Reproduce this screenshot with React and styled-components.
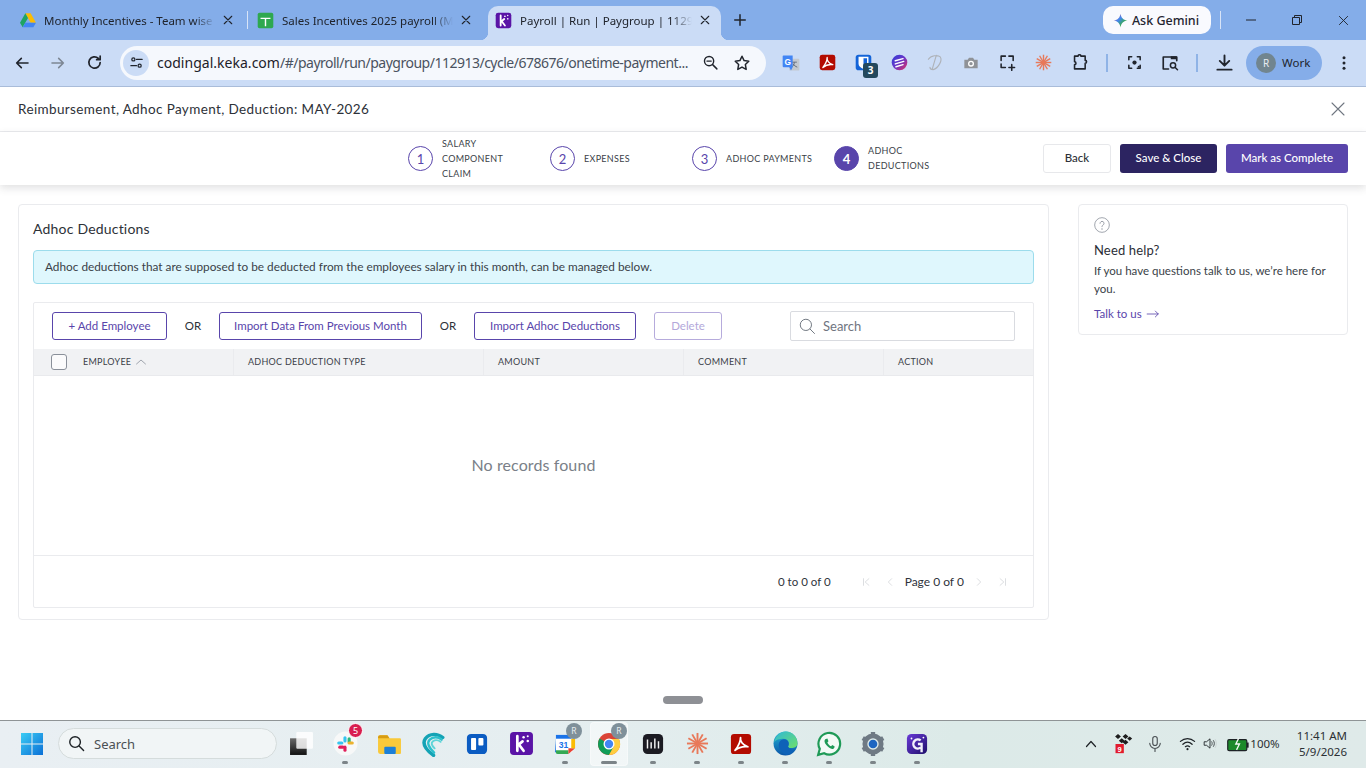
import React from "react";
import styled, { createGlobalStyle } from "styled-components";

const Global = createGlobalStyle`
  html, body { margin: 0; padding: 0; width: 1366px; height: 768px; overflow: hidden; background: #fff; }
  * { box-sizing: border-box; }
  #root { width: 1366px; height: 768px; display: flex; flex-direction: column; font-family: "Lato", "Liberation Sans", sans-serif; color: #2c3038; }
`;

const UI = `"Noto Sans", "Liberation Sans", sans-serif`;

/* ---------- browser chrome ---------- */
const TabStrip = styled.div`
  height: 40px; flex: none; background: #84ade9; display: flex; align-items: flex-end; padding-left: 8px; font-family: ${UI};
`;
const Tab = styled.div`
  width: ${p => p.$w}px; height: 34px; margin-right: ${p => p.$mr || 0}px; padding: 0 ${p => p.$pr || 8}px 6px ${p => p.$pl ?? 12}px; display: flex; align-items: center; gap: 8px;
  border-radius: 10px 10px 0 0; background: ${p => (p.$active ? "#cbdcf6" : "transparent")}; position: relative; flex: none;
  font-size: 11.5px; color: #20242c;
  ${p => p.$active && `
    &::before, &::after { content: ""; position: absolute; bottom: 0; width: 8px; height: 8px; }
    &::before { left: -8px; background: radial-gradient(circle at 0 0, transparent 8px, #cbdcf6 8.5px); }
    &::after { right: -8px; background: radial-gradient(circle at 100% 0, transparent 8px, #cbdcf6 8.5px); }
  `}
`;
const TabTitle = styled.span`
  flex: 1; min-width: 0; white-space: nowrap;
  -webkit-mask-image: linear-gradient(90deg, #000 88%, transparent);
  mask-image: linear-gradient(90deg, #000 88%, transparent);
`;
const TabSep = styled.div`
  width: 1px; height: 18px; background: #d8e4f7; margin: 0 9px 11px 6px; flex: none;
`;
const NewTab = styled.div`
  width: 24px; height: 34px; padding-bottom: 6px; display: flex; align-items: center; justify-content: center; margin-left: 7px;
`;
const Gemini = styled.div`
  margin-left: auto; margin-bottom: 6px; width: 108px; height: 28px; border-radius: 10px; background: #f9fafe; display: flex; align-items: center;
  justify-content: center; gap: 4px; padding-right: 2px; font-size: 12.5px; color: #1f2530; font-weight: 500;
`;
const WinControls = styled.div`
  display: flex; align-items: center; height: 40px; align-self: flex-start; flex: none;
`;
const WinSep = styled.div` width: 1px; height: 18px; background: #d8e4f7; margin: 0 7px 0 9px; `;
const WinBtn = styled.div` width: 46px; height: 40px; display: flex; align-items: center; justify-content: center; `;

const Toolbar = styled.div`
  height: 47px; flex: none; background: #cbdcf6; display: flex; align-items: center; padding: 0 0 1px 4px; border-bottom: 1px solid #a9bcd9;
  font-family: ${UI};
`;
const ToolBtn = styled.div`
  width: 36px; height: 34px; flex: none; display: flex; align-items: center; justify-content: center; position: relative;
`;
const Address = styled.div`
  width: 646px; height: 34px; border-radius: 17px; background: #f5f8fd; margin: 0 7px 0 8px; display: flex; align-items: center; padding: 0 8px 0 3px; flex: none;
`;
const SiteChip = styled.div`
  width: 26px; height: 26px; border-radius: 50%; background: #cbdcf6; display: flex; align-items: center; justify-content: center; margin-right: 8px; flex: none;
`;
const Url = styled.div`
  flex: 1; font-size: 14px; white-space: nowrap; color: #4a5260; letter-spacing: -.5px;
  b { font-weight: 400; color: #1d2129; letter-spacing: .02px; }
`;
const AddrBtn = styled.div` width: 32px; height: 34px; display: flex; align-items: center; justify-content: center; flex: none; `;
const ToolSep = styled.div` width: 2px; height: 18px; background: #8fb3e6; margin: 0 8px 0 ${p => p.$ml || 8}px; flex: none; `;
const Badge3 = styled.span`
  position: absolute; right: 3px; bottom: 2px; width: 15px; height: 15px; border-radius: 3px; background: #24495e; color: #fff; font-size: 10px; font-weight: 700;
  display: flex; align-items: center; justify-content: center; line-height: 1;
`;
const Profile = styled.div`
  width: 76px; height: 34px; border-radius: 17px; background: #85ade9; display: flex; align-items: center; padding-left: 10px; gap: 6px; font-size: 11.5px; color: #20242c; margin-left: 4px; flex: none;
`;
const Avatar = styled.div`
  width: 20px; height: 20px; border-radius: 50%; background: #71858f; color: #e8edf2; font-size: 10px; display: flex; align-items: center; justify-content: center;
`;
const DotsBtn = styled(ToolBtn)` margin-left: 4px; `;

/* ---------- page ---------- */
const Page = styled.div`
  flex: 1; min-height: 0; background: #fff; display: flex; flex-direction: column; position: relative;
`;
const TitleBar = styled.div`
  height: 45px; flex: none; display: flex; align-items: center; justify-content: space-between; padding: 0 20px 1px 18px; border-bottom: 1px solid #eaebee;
  font-size: 13.5px; font-weight: 400; color: #2d3138; letter-spacing: .38px;
`;
const Stepper = styled.div`
  height: 53px; flex: none; display: flex; align-items: center; padding: 0 18px 0 408px; box-shadow: 0 3px 8px rgba(60,60,70,.16); position: relative;
`;
const Step = styled.div` width: 142px; display: flex; align-items: center; gap: 9px; flex: none; `;
const StepNum = styled.div`
  width: 25px; height: 25px; border-radius: 50%; flex: none; display: flex; align-items: center; justify-content: center; font-size: 13px;
  border: 1px solid #5945ab; color: ${p => (p.$on ? "#fff" : "#5945ab")}; background: ${p => (p.$on ? "#5945ab" : "#fff")}; font-weight: ${p => (p.$on ? 700 : 400)};
`;
const StepLabel = styled.div`
  width: ${p => p.$w || 90}px; font-size: 9px; line-height: 15px; text-transform: uppercase; color: #3b3f48; letter-spacing: .3px; padding-bottom: 1px; white-space: ${p => p.$nw ? "nowrap" : "normal"};
`;
const StepButtons = styled.div` margin-left: auto; display: flex; gap: 9px; `;
const ActionBtn = styled.button`
  height: 29px; width: ${p => p.$w}px; border-radius: 3px; font: 500 11.5px "Lato", sans-serif; padding: 0 0 2px; cursor: pointer;
  border: 1px solid ${p => p.$border || "transparent"}; background: ${p => p.$bg || "#fff"}; color: ${p => p.$color || "#fff"};
`;
const Body = styled.div`
  padding: 19px 18px 0; display: flex; gap: 29px; align-items: flex-start;
`;
const Card = styled.section`
  background: #fff; border: 1px solid #eaebee; border-radius: 4px;
`;
const MainCard = styled(Card)` width: 1031px; height: 416px; padding: 0 14px; flex: none; `;
const CardTitle = styled.h2`
  margin: 0; height: 45px; padding-top: 15px; font-size: 14px; line-height: 17px; font-weight: 400; color: #2d3138; letter-spacing: .2px;
`;
const Info = styled.div`
  height: 34px; background: #dff7fd; border: 1px solid #9cdcec; border-radius: 4px; display: flex; align-items: center; padding: 0 0 1px 11px; font-size: 11.8px; color: #3a3f48;
`;
const Grid = styled.div`
  margin-top: 18px; height: 306px; border: 1px solid #eaebee; border-radius: 2px; display: flex; flex-direction: column;
`;
const GridTools = styled.div`
  height: 46px; flex: none; display: flex; align-items: center; padding: 0 18px; font-size: 11.5px;
`;
const Outline = styled.button`
  height: 28px; width: ${p => p.$w}px; border-radius: 3px; background: #fff; border: 1px solid ${p => (p.$off ? "#b6abdc" : "#5945ab")}; color: ${p => (p.$off ? "#b3a8da" : "#5945ab")};
  font: 400 11.5px "Lato", sans-serif; padding: 0 0 2px; flex: none; margin-left: ${p => p.$ml || 0}px;
`;
const Or = styled.span` width: 52px; text-align: center; flex: none; color: #2c3038; font-size: 11.5px; padding-bottom: 2px; `;
const SearchBox = styled.div`
  margin-left: auto; width: 225px; height: 30px; border: 1px solid #d9dbe0; border-radius: 2px; display: flex; align-items: center; gap: 7px; padding-left: 7px; color: #70757f; font-size: 13px;
`;
const Head = styled.div`
  height: 27px; flex: none; background: #f1f2f4; border-bottom: 1px solid #e9eaed; display: grid; grid-template-columns: 199px 250px 200px 200px 1fr;
`;
const HeadCell = styled.div`
  display: flex; align-items: center; padding: 0 0 1px ${p => p.$pl || 14}px; font-size: 9px; letter-spacing: .27px; color: #3b3f48; border-left: ${p => (p.$first ? "0" : "1px solid #eaebee")};
`;
const Check = styled.span`
  width: 16px; height: 16px; border: 1.5px solid #8a909a; border-radius: 3px; background: #fbfbfc; margin: 0 16px 0 -1px; flex: none;
`;
const SortUp = styled.svg` margin-left: 4px; `;
const Empty = styled.div`
  flex: 1; display: flex; align-items: center; justify-content: center; color: #7a7f88; font-size: 16px; letter-spacing: .1px; padding-bottom: 2px;
`;
const Foot = styled.div`
  height: 52px; flex: none; border-top: 1px solid #eaebee; display: flex; align-items: center; padding: 0 25px 0 744px; font-size: 11.5px; color: #2f333b;
`;
const FootText = styled.span` white-space: nowrap; font-size: ${p => p.$fs || 11.5}px; margin-left: ${p => p.$ml || 0}px; `;
const PageArrow = styled.span` width: 16px; display: flex; justify-content: center; flex: none; margin-left: ${p => p.$ml || 8}px; `;
const HelpCard = styled(Card)` width: 270px; height: 131px; padding: 12px 15px; flex: none; `;
const HelpTitle = styled.div` margin-top: 5px; font-size: 13px; line-height: 18px; font-weight: 400; color: #2a2e36; letter-spacing: .15px; `;
const HelpText = styled.div` margin-top: 3px; font-size: 11.5px; line-height: 18px; color: #3a3f48; `;
const HelpLink = styled.div` margin-top: 9px; font-size: 11.5px; line-height: 14px; color: #5945ab; display: flex; align-items: center; gap: 4px; `;
const Grip = styled.div`
  position: absolute; left: 663px; bottom: 16px; width: 40px; height: 8px; border-radius: 4px; background: #8e9095;
`;

/* ---------- taskbar ---------- */
const Taskbar = styled.div`
  height: 48px; flex: none; background: linear-gradient(90deg, #e9eff3 0%, #e5eef0 40%, #dceae8 70%, #dfeae9 100%); border-top: 1px solid #8f9496;
  display: flex; align-items: center; padding: 0 0 2px 20px; font-family: ${UI}; color: #1d2226;
`;
const SearchPill = styled.div`
  width: 219px; height: 31px; border-radius: 16px; background: #f1f5f6; border: 1px solid #d5dcdc; margin-left: 14px; display: flex; align-items: center; gap: 9px; padding-left: 9px;
  font-size: 13px; color: #4b5054; flex: none;
`;
const Tasks = styled.div` display: flex; margin-left: 2px; `;
const TaskItem = styled.div`
  height: 44px; display: flex; align-items: center; justify-content: center; position: relative; flex: none;
  border-radius: 4px; background: ${p => (p.$active ? "rgba(255,255,255,.5)" : "transparent")};
  box-shadow: ${p => (p.$active ? "inset 0 0 0 1px rgba(255,255,255,.4)" : "none")};
  width: ${p => (p.$active ? "38px" : "44px")}; margin: ${p => (p.$active ? "0 3px" : "0")};
`;
const RunDot = styled.span`
  position: absolute; bottom: 2px; left: 50%; transform: translateX(-50%); height: 3px; border-radius: 2px; width: ${p => (p.$wide ? 16 : 6)}px; background: #7c8488;
`;
const CountBadge = styled.span`
  position: absolute; top: 1px; right: 4px; width: 15px; height: 15px; border-radius: 50%; background: #d81e4f; border: 1px solid #fff; color: #fff; font-size: 9px; display: flex; align-items: center; justify-content: center;
`;
const RBadge = styled.span`
  position: absolute; top: 1px; right: ${p => p.$r ?? 5}px; width: 16px; height: 16px; border-radius: 50%; background: #7f909a; color: #e9eef1; font-size: 8.5px; display: flex; align-items: center; justify-content: center;
`;
const Tray = styled.div` margin-left: auto; display: flex; align-items: center; height: 100%; padding-right: 19px; `;
const TraySlot = styled.div` width: ${p => p.$w}px; display: flex; justify-content: center; align-items: center; flex: none; `;
const Battery = styled.div` width: 20px; margin-left: -4px; display: flex; justify-content: center; flex: none; font-size: 11.5px; color: #2b3034; `;
const Clock = styled.div` width: 56px; margin-left: 16px; text-align: right; font-size: 11.5px; line-height: 16px; color: #2b3034; `;

/* ---------- drawings ---------- */
const S = ({ w = 16, h, vb = "0 0 24 24", children, ...r }) => (
  <svg width={w} height={h || w} viewBox={vb} fill="none" {...r}>{children}</svg>
);
const L = ({ d, c = "#20242c", sw = 2, ...r }) => <path d={d} stroke={c} strokeWidth={sw} strokeLinecap="round" strokeLinejoin="round" fill="none" {...r} />;

const DriveIco = () => (
  <S w={16} vb="0 0 24 22">
    <path d="M8 1h8l8 14h-8z" fill="#fbbc04" />
    <path d="M8 1 0 15l4 7 8-14z" fill="#1fa463" />
    <path d="M4 22h16l4-7H8z" fill="#4285f4" />
  </S>
);
const SheetIco = () => (
  <S w={17}><rect x="1" y="1" width="22" height="22" rx="2.5" fill="#2ea84f" /><path d="M5 8h14v2h-6v10h-2V10H5z" fill="#fff" /></S>
);
const KekaIco = ({ w = 17 }) => (
  <S w={w}>
    <rect x="1" y="1" width="22" height="22" rx="3.5" fill="#5a14a6" />
    <path d="M8 5v14M8 14l5-4M9.5 13 14 19" stroke="#fff" strokeWidth="2.6" strokeLinecap="round" />
    <circle cx="14" cy="6" r="1.2" fill="#fff" /><circle cx="18" cy="9.5" r="1.2" fill="#fff" /><circle cx="18" cy="5" r="1" fill="#fff" />
  </S>
);
const X = ({ w = 10, c = "#20242c", sw = 2.6 }) => <S w={w}><L d="M3 3l18 18M21 3 3 21" c={c} sw={sw} /></S>;
const GemStar = () => (
  <S w={15}>
    <path d="M12 1c1 6 4 10 11 11-7 1-10 5-11 11-1-6-4-10-11-11 7-1 10-5 11-11z" fill="url(#gm)" />
    <defs><linearGradient id="gm" x1="0" y1="0" x2="1" y2="1"><stop offset="0" stopColor="#ea4335" /><stop offset=".4" stopColor="#4285f4" /><stop offset=".7" stopColor="#34a853" /><stop offset="1" stopColor="#fbbc04" /></linearGradient></defs>
  </S>
);
const PdfIco = ({ w = 15 }) => (
  <S w={w}>
    <rect x="1" y="1" width="22" height="22" rx="3.5" fill="#b30b00" />
    <path d="M11.5 5c-.6 3.5 2 8.5 8 10-4.5-.6-10 .6-14 4 2.800-3.500 6-9 6-14z" stroke="#fff" strokeWidth="1.9" fill="none" strokeLinejoin="round" />
  </S>
);
const SplashIco = ({ w = 16 }) => (
  <S w={w}>
    {[0, 30, 60, 90, 120, 150].map(a => (
      <line key={a} x1="12" y1="1" x2="12" y2="23" stroke="#e8795a" strokeWidth="2" transform={`rotate(${a} 12 12)`} />
    ))}
  </S>
);
const ChromeIco = () => (
  <S w={24}>
    <circle cx="12" cy="12" r="11" fill="#db4437" />
    <path d="M12 12 2.5 6.5A11 11 0 0 0 12 23l5-8z" fill="#0f9d58" />
    <path d="M12 7h10a11 11 0 0 1-10 16l5-9z" fill="#ffcd40" />
    <circle cx="12" cy="12" r="5.5" fill="#fff" /><circle cx="12" cy="12" r="4.2" fill="#4285f4" />
  </S>
);

export default function App() {
  return (
    <>
      <Global />
      <TabStrip>
        <Tab $w={233}>
          <DriveIco /><TabTitle>Monthly Incentives - Team wise</TabTitle><X />
        </Tab>
        <TabSep />
        <Tab $w={222} $mr={9} $pl={0}>
          <SheetIco /><TabTitle>Sales Incentives 2025 payroll (M</TabTitle><X />
        </Tab>
        <Tab $w={233} $active $pl={7} $pr={11}>
          <KekaIco /><TabTitle>Payroll | Run | Paygroup | 11291</TabTitle><X />
        </Tab>
        <NewTab><S w={14}><L d="M12 3v18M3 12h18" sw={2.6} /></S></NewTab>
        <Gemini><GemStar />Ask Gemini</Gemini>
        <WinControls>
          <WinSep />
          <WinBtn><S w={10} vb="0 0 10 10"><path d="M0 5h10" stroke="#20242c" /></S></WinBtn>
          <WinBtn><S w={10} vb="0 0 10 10"><path d="M.5 2.5h7v7h-7zM2.5 2V.5h7v7H8" stroke="#20242c" fill="none" /></S></WinBtn>
          <WinBtn><X w={11} sw={2} /></WinBtn>
        </WinControls>
      </TabStrip>
      <Toolbar>
        <ToolBtn><S w={16}><L d="M21 12H4M11 5l-7 7 7 7" sw={2.4} /></S></ToolBtn>
        <ToolBtn><S w={16}><L d="M3 12h17M13 5l7 7-7 7" c="#7d8794" sw={2.4} /></S></ToolBtn>
        <ToolBtn><S w={17}><L d="M20 12a8 8 0 1 1-2.5-5.8M20 3v5h-5" sw={2.4} /></S></ToolBtn>
        <Address>
          <SiteChip><S w={15}><circle cx="7" cy="7" r="2.5" stroke="#20242c" strokeWidth="2" /><circle cx="17" cy="17" r="2.5" stroke="#20242c" strokeWidth="2" /><L d="M12 7h9M3 17h9" /></S></SiteChip>
          <Url><b>codingal.keka.com</b>/#/payroll/run/paygroup/112913/cycle/678676/onetime-payment...</Url>
          <AddrBtn><S w={17}><circle cx="10" cy="10" r="6.5" stroke="#20242c" strokeWidth="2" /><L d="M15 15l6 6M7 10h6" /></S></AddrBtn>
          <AddrBtn><S w={18}><path d="m12 3 2.8 5.8 6.2.9-4.5 4.4 1.1 6.4L12 17.500l-5.6 3 1.1-6.4L3 9.7l6.2-.9z" stroke="#20242c" strokeWidth="2" strokeLinejoin="round" /></S></AddrBtn>
        </Address>
        <ToolBtn><S w={20}><rect x="10" y="7" width="12" height="14" rx="1" fill="#c3c8cf" /><path d="M13 11h6M16 11c0 3-1.5 5-3.5 6M14.5 13c1 2 3 3 5 4" stroke="#667080" strokeWidth="1.2" /><path d="M2 4a1 1 0 0 1 1-1h11v14l-2 4-2-4H3a1 1 0 0 1-1-1z" fill="#4285f4" /><text x="8" y="14" fontSize="10" fontWeight="700" fill="#fff" textAnchor="middle" fontFamily="Liberation Sans">G</text></S></ToolBtn>
        <ToolBtn><PdfIco w={17} /></ToolBtn>
        <ToolBtn><S w={17}><rect x="1" y="1" width="22" height="22" rx="4" fill="#1464d8" /><path d="M5 4h14v10c0 3-3 5-7 7-4-2-7-4-7-7z" fill="#fff" /><path d="M12 6h5v8c0 2-2 3.5-5 5z" fill="#1464d8" /></S><Badge3>3</Badge3></ToolBtn>
        <ToolBtn><S w={17}><circle cx="12" cy="12" r="11" fill="url(#bw)" /><path d="M6 9.5l11-3M6 14l12-3.5M7 18l10-3" stroke="#fff" strokeWidth="2" strokeLinecap="round" /><defs><linearGradient id="bw" x1="0" y1="0" x2="1" y2="1"><stop offset="0" stopColor="#2f3fd8" /><stop offset=".5" stopColor="#6a35c8" /><stop offset="1" stopColor="#e8305a" /></linearGradient></defs></S></ToolBtn>
        <ToolBtn><S w={19}><path d="M3 8c3-5 12-6 15-3 3 4-2 14-9 16-3 0-4-1-4-3M13 3 8 20" stroke="#aeb2b8" strokeWidth="1.4" strokeLinecap="round" /></S></ToolBtn>
        <ToolBtn><S w={16}><path d="M2 7h5l2-3h6l2 3h5v13H2z" fill="#8f9297" /><circle cx="12" cy="13" r="4.5" fill="#fff" /><circle cx="12" cy="13" r="2.5" fill="#8f9297" /></S></ToolBtn>
        <ToolBtn><S w={17}><L d="M9 3H3v6M3 14v5h6M14 3h6v6M14 19h8M18 15v8" sw={2.2} /></S></ToolBtn>
        <ToolBtn><SplashIco w={17} /></ToolBtn>
        <ToolBtn><S w={17}><L d="M5 3h5a2 2 0 0 1 4 0h6v6a2 2 0 0 1 0 4v8H5v-6a2 2 0 0 0 0-4z" sw={2.2} /></S></ToolBtn>
        <ToolSep $ml={9} />
        <ToolBtn><S w={17}><L d="M4 8V4h4M16 4h4v4M4 16v4h4M20 16v4h-4" sw={2.2} /><circle cx="12" cy="12" r="3" fill="#20242c" /><circle cx="18" cy="18" r="1.5" fill="#20242c" /></S></ToolBtn>
        <ToolBtn><S w={18}><L d="M10 20H3V4h18v5" sw={2.2} /><path d="M13 3h8v4h-8z" fill="#20242c" /><circle cx="16" cy="15" r="3.5" stroke="#20242c" strokeWidth="2" /><L d="m19 18 3 3" /></S></ToolBtn>
        <ToolSep />
        <ToolBtn><S w={19}><L d="M12 3v12M6 10l6 6 6-6M3 21h18" sw={2.4} /></S></ToolBtn>
        <Profile><Avatar>R</Avatar>Work</Profile>
        <DotsBtn><S w={18}><circle cx="12" cy="5" r="2" fill="#20242c" /><circle cx="12" cy="12" r="2" fill="#20242c" /><circle cx="12" cy="19" r="2" fill="#20242c" /></S></DotsBtn>
      </Toolbar>

      <Page>
        <TitleBar>
          <span>Reimbursement, Adhoc Payment, Deduction: MAY-2026</span>
          <X w={16} c="#6f7680" sw={1.6} />
        </TitleBar>
        <Stepper>
          <Step><StepNum>1</StepNum><StepLabel $w={78}>Salary Component Claim</StepLabel></Step>
          <Step><StepNum>2</StepNum><StepLabel>Expenses</StepLabel></Step>
          <Step><StepNum>3</StepNum><StepLabel $nw>Adhoc Payments</StepLabel></Step>
          <Step><StepNum $on>4</StepNum><StepLabel $w={70}>Adhoc Deductions</StepLabel></Step>
          <StepButtons>
            <ActionBtn $w={68} $border="#e7e8eb" $color="#2d3138">Back</ActionBtn>
            <ActionBtn $w={97} $bg="#2c2461">Save &amp; Close</ActionBtn>
            <ActionBtn $w={122} $bg="#5945ab">Mark as Complete</ActionBtn>
          </StepButtons>
        </Stepper>
        <Body>
          <MainCard>
            <CardTitle>Adhoc Deductions</CardTitle>
            <Info>Adhoc deductions that are supposed to be deducted from the employees salary in this month, can be managed below.</Info>
            <Grid>
              <GridTools>
                <Outline $w={115}>+ Add Employee</Outline>
                <Or>OR</Or>
                <Outline $w={203}>Import Data From Previous Month</Outline>
                <Or>OR</Or>
                <Outline $w={162}>Import Adhoc Deductions</Outline>
                <Outline $w={68} $off $ml={18}>Delete</Outline>
                <SearchBox>
                  <S w={18}><circle cx="10.5" cy="10.5" r="7.5" stroke="#6f7680" strokeWidth="1.3" /><L d="m16 16 6 6" c="#6f7680" sw={1.3} /></S>
                  Search
                </SearchBox>
              </GridTools>
              <Head>
                <HeadCell $first $pl={18}><Check />EMPLOYEE<SortUp width="12" height="12" viewBox="0 0 24 24" fill="none"><L d="M3 16l9-8 9 8" c="#8a909a" sw={1.6} /></SortUp></HeadCell>
                <HeadCell>ADHOC DEDUCTION TYPE</HeadCell>
                <HeadCell>AMOUNT</HeadCell>
                <HeadCell>COMMENT</HeadCell>
                <HeadCell>ACTION</HeadCell>
              </Head>
              <Empty>No records found</Empty>
              <Foot>
                <FootText>0 to 0 of 0</FootText>
                <PageArrow $ml={27}><S w={10}><L d="M6 4v16M19 4l-9 8 9 8" c="#d5d7db" sw={2} /></S></PageArrow>
                <PageArrow><S w={10}><L d="M16 4l-8 8 8 8" c="#d5d7db" sw={2} /></S></PageArrow>
                <FootText $fs={12} $ml={7}>Page 0 of 0</FootText>
                <PageArrow $ml={7}><S w={10}><L d="M8 4l8 8-8 8" c="#d5d7db" sw={2} /></S></PageArrow>
                <PageArrow><S w={10}><L d="M18 4v16M5 4l9 8-9 8" c="#d5d7db" sw={2} /></S></PageArrow>
              </Foot>
            </Grid>
          </MainCard>
          <HelpCard>
            <S w={16}><circle cx="12" cy="12" r="11" stroke="#8a909a" strokeWidth="1.2" /><L d="M9 9.5a3 3 0 1 1 4.5 2.6c-1 .6-1.5 1.2-1.5 2.4" c="#8a909a" sw={1.3} /><circle cx="12" cy="18" r="1" fill="#8a909a" /></S>
            <HelpTitle>Need help?</HelpTitle>
            <HelpText>If you have questions talk to us, we’re here for you.</HelpText>
            <HelpLink>Talk to us <S w={14}><L d="M2 12h19M16 7l5 5-5 5" c="#5945ab" sw={1.4} /></S></HelpLink>
          </HelpCard>
        </Body>
        <Grip />
      </Page>

      <Taskbar>
        <S w={24}><defs><linearGradient id="wn" x1="0" y1="0" x2="1" y2="1"><stop offset="0" stopColor="#3bcdf5" /><stop offset="1" stopColor="#0b6fd6" /></linearGradient></defs><path d="M1 1h10.5v10.5H1zM12.500 1H23v10.500H12.500zM1 12.500h10.500V23H1zM12.500 12.500H23V23H12.500z" fill="url(#wn)" /></S>
        <SearchPill><S w={17}><circle cx="10" cy="10" r="7.5" stroke="#1d2226" strokeWidth="2" /><L d="m16 16 6 6" c="#1d2226" /></S>Search</SearchPill>
        <Tasks>
          <TaskItem><S w={25}><defs><linearGradient id="tv" x1="0" y1="0" x2="0" y2="1"><stop offset="0" stopColor="#6a6a6a" /><stop offset="1" stopColor="#111" /></linearGradient></defs><rect x="1" y="7" width="16" height="16" fill="url(#tv)" /><rect x="7" y="1" width="16" height="16" rx="1" fill="#fff" opacity=".82" /></S></TaskItem>
          <TaskItem><S w={25}><circle cx="12" cy="12" r="11.5" fill="#f7f8f8" /><rect x="10" y="5" width="3" height="6" rx="1.5" fill="#36c5f0" /><rect x="4" y="10" width="6" height="3" rx="1.5" fill="#36c5f0" /><rect x="14" y="6" width="3" height="6" rx="1.5" fill="#2eb67d" /><rect x="14" y="10" width="6" height="3" rx="1.5" fill="#ecb22e" /><rect x="10" y="14" width="3" height="6" rx="1.5" fill="#e01e5a" /><rect x="5" y="14" width="6" height="3" rx="1.5" fill="#e01e5a" /></S><CountBadge>5</CountBadge><RunDot /></TaskItem>
          <TaskItem><S w={25}><path d="M1 6a2 2 0 0 1 2-2h7l2 3h10a1 1 0 0 1 1 1v13a1 1 0 0 1-1 1H3a2 2 0 0 1-2-2z" fill="#f9c93a" /><path d="M1 6a2 2 0 0 1 2-2h7l2 3H1z" fill="#d79c13" /><rect x="7" y="15" width="11" height="7" rx="1" fill="#1c80d8" /></S></TaskItem>
          <TaskItem><S w={26}><L d="M12.5 22.5C5 17 1.500 12 5 7c4-5 11-5 16-1" c="#14a3b5" sw={3.2} /><L d="M13 20C8 15 6 11 9 8c3-3 8-3 11 0" c="#2cc0cc" sw={2.2} /><L d="M13.5 16c-3-3-3.5-5-1.5-6.5 2-1.5 5-1 7 .5" c="#5fd4d8" sw={1.8} /></S></TaskItem>
          <TaskItem><S w={22}><rect x="1" y="1" width="22" height="22" rx="4.5" fill="#0b5cc2" /><rect x="5.5" y="5.5" width="5.5" height="13" rx="1" fill="#fff" /><rect x="13.5" y="5.5" width="5.5" height="8" rx="1" fill="#fff" /></S></TaskItem>
          <TaskItem><KekaIco w={25} /></TaskItem>
          <TaskItem><S w={23}><path d="M2 3h17v18H2z" fill="#fff" /><path d="M2 3h16v4H2z" fill="#1a73e8" /><path d="M2 7v14H1z" fill="#1a73e8" /><path d="M2 19h13v4H4a2 2 0 0 1-2-2z" fill="#34a853" /><path d="M15 17h7l-7 6z" fill="#ea4335" /><path d="M18 7h4v10h-4z" fill="#fbbc04" /><text x="10" y="17" fontSize="9" fontWeight="700" textAnchor="middle" fill="#1a73e8" fontFamily="Liberation Sans">31</text></S><RBadge>R</RBadge><RunDot /></TaskItem>
          <TaskItem $active><ChromeIco /><RBadge $r={1}>R</RBadge><RunDot $wide /></TaskItem>
          <TaskItem><S w={22}><rect x="1" y="1" width="22" height="22" rx="5" fill="#1b1b22" /><path d="M6 7v10M10 10v7M14 6v11M18 9v8" stroke="#f1f1f1" strokeWidth="1.6" /></S><RunDot /></TaskItem>
          <TaskItem><SplashIco w={23} /><RunDot /></TaskItem>
          <TaskItem><PdfIco w={22} /><RunDot /></TaskItem>
          <TaskItem>
            <S w={25}>
              <defs>
                <linearGradient id="eb" x1="0" y1="0" x2="0" y2="1"><stop offset="0" stopColor="#23b6d6" /><stop offset="1" stopColor="#0b55a8" /></linearGradient>
                <linearGradient id="eg" x1="0" y1="0" x2="1" y2="1"><stop offset="0" stopColor="#2fb8d8" /><stop offset="1" stopColor="#6ee06a" /></linearGradient>
              </defs>
              <circle cx="12" cy="12" r="11.5" fill="url(#eb)" />
              <path d="M1 11C2.5 4.5 7 .5 12.5.5 19 .5 23.5 6 23.5 12c0 4-6 5.500-9.500 3.500 2.500-3 .5-8-4-8-3.500 0-7.500 1-9 3.500z" fill="url(#eg)" />
              <path d="M10 8c4-1 6.500 3 4.500 7 1.500 2 4 3.500 6.500 3-2.500 3-6 5-8 5-4-1-7.500-6-7.500-9.500C5.500 11 7 8.500 10 8z" fill="#0e62b8" />
            </S>
            <RunDot />
          </TaskItem>
          <TaskItem><S w={26}><path d="M2 22l1.5-5.5A10 10 0 1 1 7.5 20.500z" stroke="#1f9a57" strokeWidth="2" fill="#f3faf6" /><path d="M8.5 7.5c-1 1-1 3 1 5.500s4.500 4 6 3.500 2-2 1.500-2.500l-2-1-1 1c-1 0-3-2-3.500-3.500l1-1-1-2.500z" fill="#1f9a57" /></S><RunDot /></TaskItem>
          <TaskItem><S w={26}><circle cx="12" cy="12" r="7.5" stroke="#6f7a84" strokeWidth="4.5" /><path d="M12 1v3M12 20v3M2.5 6.5l2.6 1.5M18.900 16l2.600 1.500M2.500 17.500 5.100 16M18.900 8l2.600-1.500" stroke="#6f7a84" strokeWidth="4" /><circle cx="12" cy="12" r="4" fill="#1e66c1" /></S><RunDot /></TaskItem>
          <TaskItem><S w={22}><defs><linearGradient id="qq" x1="0" y1="0" x2="1" y2="1"><stop offset="0" stopColor="#6a3ad8" /><stop offset="1" stopColor="#1f0f6a" /></linearGradient></defs><rect x="1" y="1" width="22" height="22" rx="5" fill="url(#qq)" /><path d="M16 8a5 5 0 1 0 0 8M13 12h4v9" stroke="#f3f1fb" strokeWidth="2.6" /><circle cx="6" cy="6" r="1" fill="#fff" /><circle cx="19" cy="5" r="1" fill="#fff" /></S><RunDot /></TaskItem>
        </Tasks>
        <Tray>
          <TraySlot $w={32}><S w={12}><L d="M3 17l9-10 9 10" c="#1d2226" sw={2.4} /></S></TraySlot>
          <TraySlot $w={32}><S w={20}><path d="M6 0l3.500 3L6 6 2.500 3zM15 0l3.500 3L15 6l-3.500-3zM10.500 5 14 8l-3.500 3L7 8zM15 7l3.500 3L15 13l-3.500-3zM20 3l3 2.500L20 8l-3-2.500z" fill="#1d1d1d" /><rect x="3" y="12" width="10" height="11" fill="#e21b2d" /><text x="8" y="21" fontSize="9" fontWeight="700" fill="#fff" textAnchor="middle" fontFamily="Liberation Sans">9</text></S></TraySlot>
          <TraySlot $w={32}><S w={18}><rect x="9" y="2" width="6" height="12" rx="3" stroke="#4a5054" strokeWidth="1.5" /><L d="M5 11a7 7 0 0 0 14 0M12 18v4" c="#4a5054" sw={1.5} /></S></TraySlot>
          <TraySlot $w={32}><S w={17}><L d="M2 9c6-5 14-5 20 0M5.500 13c4-3.500 9-3.500 13 0M9 16.500c2-1.500 4-1.500 6 0" c="#1d2226" sw={1.8} /><circle cx="12" cy="20" r="1.5" fill="#1d2226" /></S></TraySlot>
          <TraySlot $w={14}><S w={17}><path d="M2 9h4l6-5v16l-6-5H2z" stroke="#1d2226" strokeWidth="1.5" /><L d="M15 9c1 2 1 4 0 6M18 7c2 3 2 7 0 10" c="#1d2226" sw={1.3} /><L d="M21 5c2.500 4 2.500 10 0 14" c="#c4cccc" sw={1.2} /></S></TraySlot>
          <TraySlot $w={42}><S w={22} vb="0 0 30 20"><rect x="1" y="4" width="26" height="15" rx="2" fill="#1c8a2a" stroke="#1d2226" strokeWidth="1.6" /><rect x="27" y="8" width="2.5" height="7" fill="#1d2226" /><path d="M16 2l-4 8h5l-4 8" stroke="#f3f8f3" strokeWidth="1.8" /></S></TraySlot>
          <Battery>100%</Battery>
          <Clock>11:41 AM<br />5/9/2026</Clock>
        </Tray>
      </Taskbar>
    </>
  );
}
